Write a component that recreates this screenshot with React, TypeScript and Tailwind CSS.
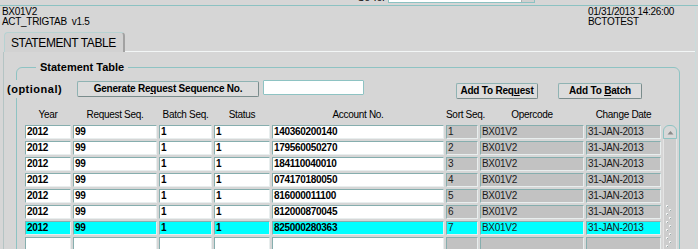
import React from 'react';

interface Row {
  year: string;
  req: string;
  batch: string;
  status: string;
  acct: string;
  sort: string;
  oper: string;
  date: string;
}

const rows: Row[] = [
  { year: '2012', req: '99', batch: '1', status: '1', acct: '140360200140', sort: '1', oper: 'BX01V2', date: '31-JAN-2013' },
  { year: '2012', req: '99', batch: '1', status: '1', acct: '179560050270', sort: '2', oper: 'BX01V2', date: '31-JAN-2013' },
  { year: '2012', req: '99', batch: '1', status: '1', acct: '184110040010', sort: '3', oper: 'BX01V2', date: '31-JAN-2013' },
  { year: '2012', req: '99', batch: '1', status: '1', acct: '074170180050', sort: '4', oper: 'BX01V2', date: '31-JAN-2013' },
  { year: '2012', req: '99', batch: '1', status: '1', acct: '816000011100', sort: '5', oper: 'BX01V2', date: '31-JAN-2013' },
  { year: '2012', req: '99', batch: '1', status: '1', acct: '812000870045', sort: '6', oper: 'BX01V2', date: '31-JAN-2013' },
  { year: '2012', req: '99', batch: '1', status: '1', acct: '825000280363', sort: '7', oper: 'BX01V2', date: '31-JAN-2013' },
  { year: '', req: '', batch: '', status: '', acct: '', sort: '', oper: '', date: '' },
];

const cols: { key: keyof Row; label: string; w: string; gray: boolean }[] = [
  { key: 'year', label: 'Year', w: 'w-[46px]', gray: false },
  { key: 'req', label: 'Request Seq.', w: 'w-[84px]', gray: false },
  { key: 'batch', label: 'Batch Seq.', w: 'w-[53px]', gray: false },
  { key: 'status', label: 'Status', w: 'w-[56px]', gray: false },
  { key: 'acct', label: 'Account No.', w: 'w-[172px]', gray: false },
  { key: 'sort', label: 'Sort Seq.', w: 'w-[32px]', gray: true },
  { key: 'oper', label: 'Opercode', w: 'w-[104px]', gray: true },
  { key: 'date', label: 'Change Date', w: 'w-[75px]', gray: true },
];

const SELECTED = 6;

function Btn({ children, className }: { children: React.ReactNode; className?: string }) {
  return (
    <div className={`h-[16px] flex items-center justify-center rounded-[2px] border border-[#8fb3b3] border-b-[#7a8c8c] border-r-[#7a8c8c] bg-[#dcdcdc] text-[10px] font-bold tracking-[-0.2px] leading-none ${className ?? ''}`}>
      <span className="whitespace-pre">{children}</span>
    </div>
  );
}

export default function App() {
  return (
    <div className="w-[698px] h-[249px] overflow-hidden bg-[#d6d6d6] text-black font-['Liberation_Sans',Arial,sans-serif]">
      {/* top strip (cut off "Go To:" field) */}
      <div className="h-[6px] overflow-hidden border-b border-[#8cc2c2] flex items-end pl-[357px]">
        <span className="text-[10px] leading-[10px] tracking-[-0.3px] mb-[2px]">Go To:</span>
        <div className="ml-[4px] mb-[2px] w-[147px] h-[14px] flex border border-[#8cc2c2] bg-white">
          <div className="flex-1" />
          <div className="w-[13px] bg-[#d0d0d0] border-l border-[#b0b0b0]" />
        </div>
      </div>

      <div className="w-[696px] border-r border-[#c9dcdc]">
        {/* header */}
        <div className="h-[26px] flex justify-between pl-[2px] pt-[1px] text-[10px] leading-[10px] tracking-[-0.3px]">
          <div>
            <div>BX01V2</div>
            <div className="whitespace-pre">ACT_TRIGTAB  v1.5</div>
          </div>
          <div className="w-[107px]">
            <div>01/31/2013 14:26:00</div>
            <div>BCTOTEST</div>
          </div>
        </div>

        {/* tab bar */}
        <div className="h-[20px] flex items-stretch pl-[4px]">
          <div className="w-[121px] rounded-t-[4px] border-l border-t border-[#b6d2d2] border-r-2 border-r-[#a2a2a2] bg-[#d2d2d2] flex items-center pl-[6px] text-[12px] tracking-[-0.4px]">
            STATEMENT TABLE
          </div>
          <div className="flex-1 border-b border-[#f2f6f6]" />
        </div>

        {/* tab page */}
        <div className="ml-[3px] border-l border-[#b4c4c4] h-[200px] pt-[9px]">
          <fieldset className="ml-[12px] w-[664px] h-[220px] border border-[#8ec3c3] rounded-[6px] p-0">
            <legend className="ml-[19px] px-[4px] text-[11px] font-bold leading-[12px]">Statement Table</legend>

            <div className="mt-[7px] flex items-start h-[18px]">
              <div className="-ml-[10px] w-[70px] h-[18px] bg-[#d6d6d6] flex items-center text-[11px] font-bold tracking-[0.5px] leading-none">(optional)</div>
              <Btn className="w-[182px] mt-[1px]">
                Generate Re<span className="underline">q</span>uest Sequence No.
              </Btn>
              <div className="ml-[4px] w-[101px] h-[15px] bg-white border border-[#8ec3c3] rounded-[1px]" />
              <Btn className="ml-[92px] mt-[3px] w-[82px]">
                Add To Req<span className="underline">u</span>est
              </Btn>
              <Btn className="ml-[20px] mt-[3px] w-[84px]">
                Add To <span className="underline">B</span>atch
              </Btn>
            </div>

            <div className="ml-[8px] mt-[11px] flex gap-[2px] h-[12px] text-[10px] tracking-[-0.3px] leading-[12px]">
              {cols.map((c) => (
                <div key={c.key} className={`${c.w} text-center whitespace-nowrap`}>{c.label}</div>
              ))}
            </div>

            <div className="ml-[8px] mt-[4px] flex items-start">
              <div className="flex flex-col gap-[2px]">
                {rows.map((r, i) => (
                  <div key={i} className="flex gap-[2px] h-[14px]">
                    {cols.map((c) => {
                      const sel = i === SELECTED;
                      const bg = sel ? 'bg-[#00ffff]' : c.gray ? 'bg-[#c2c2c2]' : 'bg-white';
                      const weight = c.gray ? 'font-normal text-[#1a1a1a]' : 'font-bold';
                      return (
                        <div
                          key={c.key}
                          className={`${c.w} ${bg} ${weight} border border-[#86aeae] border-b-[#e8eeee] border-r-[#e8eeee] pl-[1px] text-[10px] tracking-[-0.3px] leading-[12px] whitespace-nowrap overflow-hidden`}
                        >
                          {r[c.key]}
                        </div>
                      );
                    })}
                  </div>
                ))}
              </div>

              {/* scrollbar */}
              <div className="ml-[2px] w-[14px] h-[130px] flex flex-col">
                <div className="h-[14px] rounded-t-[6px] border border-[#8ec3c3] bg-[#d8d8d8] flex items-center justify-center">
                  <svg width="7" height="5" viewBox="0 0 7 5">
                    <path d="M0.5 4.5 L3.5 1 L6.5 4.5 Z" fill="#8a8a8a" />
                  </svg>
                </div>
                <div className="flex-1 bg-[#cdcdcd] border-x border-[#e4e4e4] flex flex-col items-start pl-[1px] pt-[66px]">
                  <svg width="8" height="48" viewBox="0 0 8 48">
                    {Array.from({ length: 12 }).map((_, k) => (
                      <g key={k}>
                        <rect x={k % 2 === 0 ? 1 : 4} y={k * 4} width="2" height="2" fill="#f4f4f4" />
                        <rect x={k % 2 === 0 ? 2 : 5} y={k * 4 + 1} width="1" height="1" fill="#9aa" />
                      </g>
                    ))}
                  </svg>
                </div>
              </div>
            </div>
          </fieldset>
        </div>
      </div>
    </div>
  );
}
